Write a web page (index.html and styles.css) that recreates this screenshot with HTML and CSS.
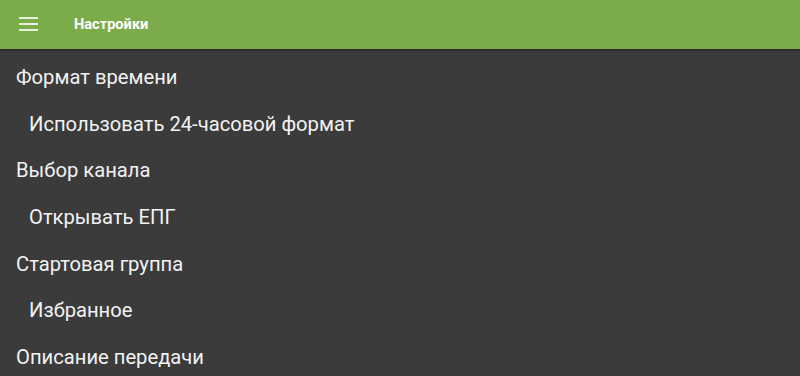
FILE: index.html
```html
<!DOCTYPE html>
<html lang="ru">
<head>
    <meta charset="UTF-8">
    <meta name="viewport" content="width=device-width, initial-scale=1.0">
    <title>Настройки</title>
    <link rel="stylesheet" href="styles.css">
</head>
<body>
    <div class="toolbar">
        <div class="menu-icon">
            <span></span>
            <span></span>
            <span></span>
        </div>
        <div class="toolbar-title">Настройки</div>
    </div>

    <div class="settings">
        <div class="group-title">Формат времени</div>
        <div class="option">Использовать 24-часовой формат</div>
        <div class="group-title">Выбор канала</div>
        <div class="option">Открывать ЕПГ</div>
        <div class="group-title">Стартовая группа</div>
        <div class="option">Избранное</div>
        <div class="group-title">Описание передачи</div>
    </div>
</body>
</html>
```

FILE: styles.css
```css
body {
    margin: 0;
    padding: 0;
    background-color: #3b3b3b;
    font-family: Roboto, 'Noto Sans', Arial, sans-serif;
    color: #f2f2f2;
    height: 100vh;
    overflow: hidden;
}

.toolbar {
    height: 49px;
    background-color: #7cab49;
    display: flex;
    align-items: center;
    box-shadow: 0 1px 2px rgba(0, 0, 0, 0.45);
    position: relative;
}

.menu-icon {
    width: 19px;
    margin-left: 19px;
    display: flex;
    flex-direction: column;
    gap: 4px;
    margin-top: -1px;
}

.menu-icon span {
    display: block;
    height: 2px;
    background-color: #e8efdc;
}

.toolbar-title {
    margin-left: 36px;
    font-size: 14.6px;
    font-weight: bold;
    color: #ffffff;
    margin-top: -2px;
}

.settings {
    display: flex;
    flex-direction: column;
    padding-top: 5px;
}

.group-title,
.option {
    height: 46.6px;
    display: flex;
    align-items: center;
    font-size: 20.2px;
    padding-left: 16px;
}

.option {
    padding-left: 29px;
}
```
